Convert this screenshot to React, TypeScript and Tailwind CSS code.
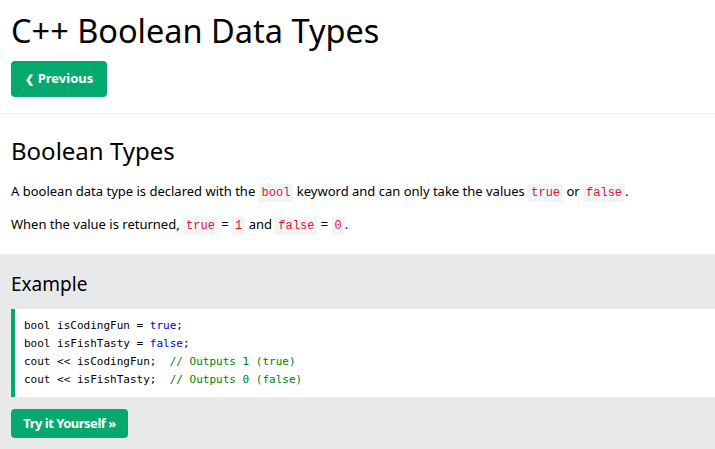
import React from "react";

function Code({ children }: { children: React.ReactNode }) {
  return (
    <code className="font-['Liberation_Mono',monospace] text-[12px] text-[#dc143c] bg-[#f3f4f6] px-[3px] py-[2px]">
      {children}
    </code>
  );
}

export default function App() {
  return (
    <div className="w-[715px] h-[449px] overflow-hidden bg-white text-black font-['Noto_Sans','Open_Sans',sans-serif]">
      <div className="px-[11px] pt-[9px] pb-[16px]">
        <h1 className="text-[32.5px] leading-[44px] font-normal">C++ Boolean Data Types</h1>
        <div className="mt-[8px]">
          <button className="h-[36px] w-[96px] rounded-[4px] bg-[#04aa6d] text-white text-[13px] font-bold flex items-center justify-center gap-[4px]">
            <span className="text-[11px]">❮</span>
            <span>Previous</span>
          </button>
        </div>
      </div>
      <div className="h-px bg-[#eeeeee]" />
      <div className="px-[11px] pt-[21px]">
        <h2 className="text-[24px] leading-[32px] font-normal">Boolean Types</h2>
        <p className="mt-[14px] text-[13px] leading-[20px]">
          A boolean data type is declared with the <Code>bool</Code> keyword and can only take the values{" "}
          <Code>true</Code> or <Code>false</Code>.
        </p>
        <p className="mt-[11px] text-[13px] leading-[20px]">
          When the value is returned, <Code>true</Code> = <Code>1</Code> and <Code>false</Code> ={" "}
          <Code>0</Code>.
        </p>
      </div>
      <div className="mt-[18px] bg-[#e7e9eb] pl-[11px] pt-[16px] pb-[16px]">
        <h3 className="text-[19px] leading-[28px] font-normal">Example</h3>
        <div className="mt-[11px] bg-white border-l-[4px] border-[#04aa6d] pl-[9px] py-[8px] font-['DejaVu_Sans_Mono',monospace] text-[11px] leading-[18px] whitespace-pre">
          <div>bool isCodingFun = <span className="text-[#0000cd]">true</span>;</div>
          <div>bool isFishTasty = <span className="text-[#0000cd]">false</span>;</div>
          <div>cout &lt;&lt; isCodingFun;  <span className="text-[#008000]">// Outputs 1 (true)</span></div>
          <div>cout &lt;&lt; isFishTasty;  <span className="text-[#008000]">// Outputs 0 (false)</span></div>
        </div>
        <button className="mt-[12px] h-[29px] w-[117px] rounded-[4px] bg-[#04aa6d] text-white text-[13px] font-bold tracking-[-0.5px] flex items-center justify-center">
          Try it Yourself »
        </button>
      </div>
    </div>
  );
}
